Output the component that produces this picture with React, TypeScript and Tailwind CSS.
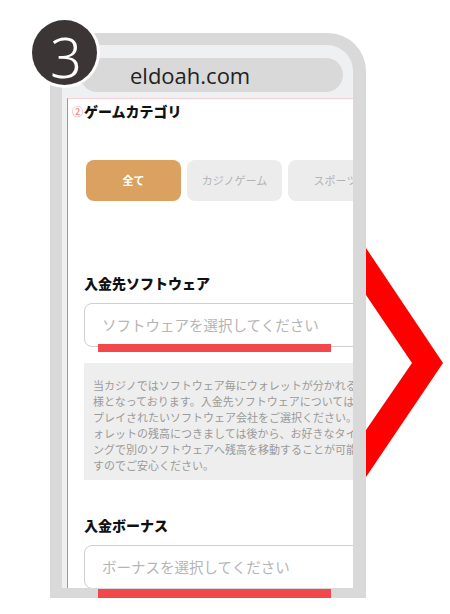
import React from 'react'

const JP = { fontFamily: '"Noto Sans CJK JP", "Noto Sans", sans-serif' }

const NOTICE = [
  '当カジノではソフトウェア毎にウォレットが分かれる仕',
  '様となっております。入金先ソフトウェアについては',
  'プレイされたいソフトウェア会社をご選択ください。ウ',
  'ォレットの残高につきましては後から、お好きなタイミ',
  'ングで別のソフトウェアへ残高を移動することが可能で',
  'すのでご安心ください。',
]

export default function App() {
  return (
    <div className="relative w-[450px] h-[614px] bg-white overflow-hidden" style={JP}>
      {/* phone frame */}
      <div className="ml-[50px] mt-[33px] w-[316px] h-[565px] bg-[#d9d9d9] rounded-tr-[38px] pt-[12px] pl-[12px] pr-[13px] pb-[10px]">
        <div className="h-full flex flex-col bg-[#eff0f2] rounded-tr-[26px] pt-[13px] pl-[5px]">
          <div className="ml-[13px] mr-[10px] h-[34px] shrink-0 rounded-full bg-[#d9d9d9] flex items-center pl-[50px]">
            <span className="text-[22px] leading-none text-[#222]" style={{ fontFamily: '"Open Sans", sans-serif' }}>
              eldoah.com
            </span>
          </div>

          <div className="mt-[6px] flex-1 bg-white border-l border-t border-l-[#f27474] border-t-[#f8cfd3] overflow-hidden">
            <div className="mt-[2px] pl-[4px] flex items-center h-[20px]">
              <span className="text-[11px] leading-none text-[#ef6b6b] mr-[1px]">②</span>
              <span className="text-[14px] font-black text-[#111]">ゲームカテゴリ</span>
            </div>

            <div className="mt-[39px] pl-[18px] flex gap-[6px] whitespace-nowrap">
              <div className="w-[95px] h-[41px] shrink-0 rounded-[8px] bg-[#dba161] flex items-center justify-center text-[11px] font-bold text-white">
                全て
              </div>
              <div className="w-[95px] h-[41px] shrink-0 rounded-[8px] bg-[#ececec] flex items-center justify-center text-[11px] text-[#b3b3b3]">
                カジノゲーム
              </div>
              <div className="w-[95px] h-[41px] shrink-0 rounded-[8px] bg-[#ececec] flex items-center justify-center text-[11px] text-[#b3b3b3]">
                スポーツ
              </div>
            </div>

            <div className="mt-[72px] pl-[16px] h-[20px] flex items-center text-[14px] font-black text-[#111]">
              入金先ソフトウェア
            </div>
            <div className="mt-[10px] ml-[16px] w-[300px] h-[44px] border border-[#cfcfcf] rounded-[8px] flex items-center pl-[17px] text-[14.5px] text-[#b5b5b5] whitespace-nowrap">
              ソフトウェアを選択してください
            </div>

            <div className="mt-[16px] ml-[16px] w-[300px] h-[117px] bg-[#eeeeee] pt-[14px] pl-[9px] text-[11px] leading-[16px] text-[#9a9a9a] whitespace-nowrap">
              {NOTICE.map(line => (
                <div key={line}>{line}</div>
              ))}
            </div>

            <div className="mt-[35px] pl-[16px] h-[20px] flex items-center text-[14px] font-black text-[#111]">
              入金ボーナス
            </div>
            <div className="mt-[10px] ml-[16px] w-[300px] h-[44px] border border-[#cfcfcf] rounded-[8px] flex items-center pl-[17px] text-[14.5px] text-[#b5b5b5] whitespace-nowrap">
              ボーナスを選択してください
            </div>
          </div>
        </div>
      </div>

      {/* step badge */}
      <div className="absolute left-[29px] top-[17px] w-[71px] h-[71px] rounded-full bg-white p-[3px]">
        <div className="w-full h-full rounded-full bg-[#3b3635] flex items-center justify-center">
          <span className="text-[56px] font-light leading-none text-white pl-[3px] pt-[6px]" style={{ fontFamily: '"Noto Sans", sans-serif' }}>
            3
          </span>
        </div>
      </div>

      {/* red highlight bars */}
      <div className="absolute left-[98px] top-[344px] w-[233px] h-[8px] bg-[#f2474b]" />
      <div className="absolute left-[98px] top-[589px] w-[233px] h-[9px] bg-[#f2474b]" />

      {/* chevron */}
      <svg className="absolute left-[366px] top-[245px]" width="80" height="236" viewBox="366 245 80 236">
        <polygon points="366,248 443,363 366,477 366,430 412,363 366,295" fill="#ff0000" />
      </svg>
    </div>
  )
}
